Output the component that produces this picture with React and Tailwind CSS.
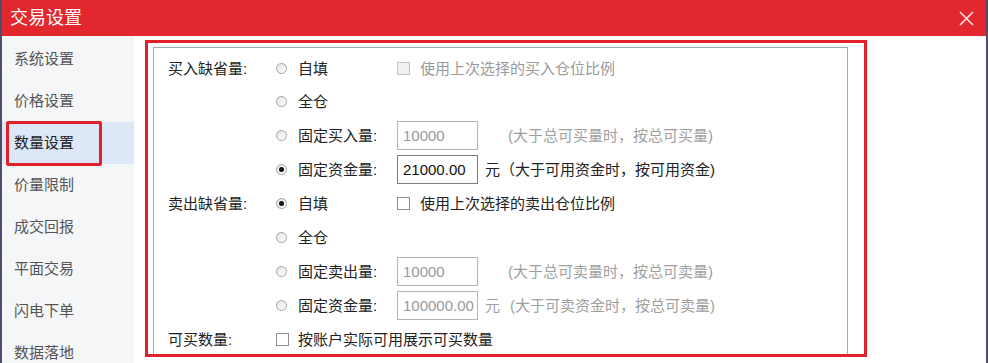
import { useState } from 'react';

const menu = ['系统设置', '价格设置', '数量设置', '价量限制', '成交回报', '平面交易', '闪电下单', '数据落地'];

function Radio({ checked }) {
  return (
    <span className="w-[11px] h-[11px] rounded-full border border-[#a3a3a3] bg-gradient-to-br from-[#e4e4e4] to-white flex items-center justify-center shrink-0">
      {checked && <span className="w-[5px] h-[5px] rounded-full bg-[#111]" />}
    </span>
  );
}

function Checkbox({ disabled }) {
  return (
    <span
      className={
        'w-[13px] h-[13px] border shrink-0 ' +
        (disabled ? 'border-[#c4c4c4] bg-[#f0f0f0]' : 'border-[#8f8f8f] bg-white')
      }
    />
  );
}

function Field({ value, active }) {
  return (
    <div
      className={
        'w-[81px] h-[29px] border flex items-center pl-[5px] text-[15px] overflow-hidden whitespace-nowrap ' +
        (active ? 'border-[#7c7c7c] text-[#111]' : 'border-[#b4b4b4] text-[#9a9a9a]')
      }
    >
      {value}
    </div>
  );
}

function Row({ label, radio, option, children, h = 'h-[34px]' }) {
  return (
    <div className={'flex items-center ' + h}>
      <div className="w-[108px] shrink-0 text-[#222]">{label}</div>
      <div className="w-[22px] shrink-0">
        <Radio checked={radio} />
      </div>
      <div className="w-[99px] shrink-0 text-[#222]">{option}</div>
      {children}
    </div>
  );
}

export default function App() {
  const [active] = useState(2);

  return (
    <div className="w-[988px] h-[363px] overflow-hidden border-x-2 border-[#4e4c6c] bg-white flex flex-col font-[family-name:'Liberation_Sans','Noto_Sans_CJK_SC',sans-serif]">
      {/* Title bar */}
      <header className="h-[36px] shrink-0 bg-[#e2272e] flex items-center justify-between pl-[8px] pr-[10px]">
        <span className="text-white text-[18px] leading-none">交易设置</span>
        <svg width="17" height="17" viewBox="0 0 17 17" className="mr-[1px]">
          <path d="M2 2L15 15M15 2L2 15" stroke="#fde2e3" strokeWidth="1.6" />
        </svg>
      </header>

      <div className="flex flex-1 min-h-0">
        {/* Sidebar */}
        <aside className="w-[132px] shrink-0 bg-[#f5f6f8] pt-[2px]">
          {menu.map((m, i) => (
            <div
              key={m}
              className={
                'relative h-[42px] flex items-center pl-[12px] text-[15px] ' +
                (i === active ? 'bg-[#dce8f8] text-[#222]' : 'text-[#555]')
              }
            >
              {m}
              {i === active && (
                <span className="absolute left-[4px] top-[-1px] w-[96px] h-[45px] border-[3px] border-[#e0202b] rounded-[2px]" />
              )}
            </div>
          ))}
        </aside>

        {/* Content */}
        <main className="flex-1 pl-[11px] pt-[4px]">
          <div className="w-[722px] h-[317px] border-[3px] border-[#e0202b] overflow-hidden">
            <div className="ml-[5px] mt-[4px] mr-[16px] h-[340px] border border-b-0 border-[#a9a9a9] pt-[4px] pl-[14px] text-[15px] leading-none">
              <Row label="买入缺省量:" option="自填" h="h-[32px]">
                <Checkbox disabled />
                <span className="ml-[10px] text-[#9a9a9a]">使用上次选择的买入仓位比例</span>
              </Row>
              <Row option="全仓" />
              <Row option="固定买入量:">
                <Field value="10000" />
                <span className="ml-[30px] text-[#a0a0a0]">(大于总可买量时，按总可买量)</span>
              </Row>
              <Row option="固定资金量:" radio>
                <Field value="21000.00" active />
                <span className="ml-[7px] text-[#222]">元（大于可用资金时，按可用资金)</span>
              </Row>
              <Row label="卖出缺省量:" option="自填" radio>
                <Checkbox />
                <span className="ml-[10px] text-[#222]">使用上次选择的卖出仓位比例</span>
              </Row>
              <Row option="全仓" />
              <Row option="固定卖出量:">
                <Field value="10000" />
                <span className="ml-[30px] text-[#a0a0a0]">(大于总可卖量时，按总可卖量)</span>
              </Row>
              <Row option="固定资金量:">
                <Field value="100000.00" />
                <span className="ml-[7px] text-[#a0a0a0]">元</span>
                <span className="ml-[10px] text-[#a0a0a0]">(大于可卖资金时，按总可卖量)</span>
              </Row>
              <div className="flex items-center h-[34px]">
                <div className="w-[108px] shrink-0 text-[#222]">可买数量:</div>
                <Checkbox />
                <span className="ml-[9px] text-[#222]">按账户实际可用展示可买数量</span>
              </div>
            </div>
          </div>
        </main>
      </div>
    </div>
  );
}
